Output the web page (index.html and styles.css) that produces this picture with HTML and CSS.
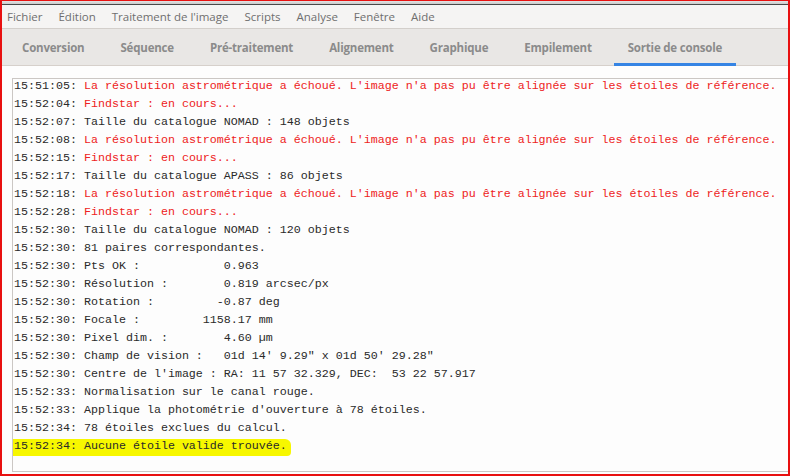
FILE: index.html
```html
<!DOCTYPE html>
<html lang="fr">
<head>
    <meta charset="UTF-8">
    <title>Sortie de console</title>
    <link rel="stylesheet" href="styles.css">
</head>
<body>
    <div class="window">
        <div class="top-edge"></div>

        <div class="menubar">
            <span class="menu-item">Fichier</span>
            <span class="menu-item">Édition</span>
            <span class="menu-item">Traitement de l'image</span>
            <span class="menu-item">Scripts</span>
            <span class="menu-item">Analyse</span>
            <span class="menu-item">Fenêtre</span>
            <span class="menu-item">Aide</span>
        </div>

        <div class="tabbar">
            <div class="tab">Conversion</div>
            <div class="tab">Séquence</div>
            <div class="tab">Pré-traitement</div>
            <div class="tab">Alignement</div>
            <div class="tab">Graphique</div>
            <div class="tab">Empilement</div>
            <div class="tab active">Sortie de console</div>
        </div>

        <div class="content">
            <div class="console">
                <div class="line">15:51:05: <span class="err">La résolution astrométrique a échoué. L'image n'a pas pu être alignée sur les étoiles de référence.</span></div>
                <div class="line">15:52:04: <span class="err">Findstar : en cours...</span></div>
                <div class="line">15:52:07: Taille du catalogue NOMAD : 148 objets</div>
                <div class="line">15:52:08: <span class="err">La résolution astrométrique a échoué. L'image n'a pas pu être alignée sur les étoiles de référence.</span></div>
                <div class="line">15:52:15: <span class="err">Findstar : en cours...</span></div>
                <div class="line">15:52:17: Taille du catalogue APASS : 86 objets</div>
                <div class="line">15:52:18: <span class="err">La résolution astrométrique a échoué. L'image n'a pas pu être alignée sur les étoiles de référence.</span></div>
                <div class="line">15:52:28: <span class="err">Findstar : en cours...</span></div>
                <div class="line">15:52:30: Taille du catalogue NOMAD : 120 objets</div>
                <div class="line">15:52:30: 81 paires correspondantes.</div>
                <div class="line">15:52:30: Pts OK :            0.963</div>
                <div class="line">15:52:30: Résolution :        0.819 arcsec/px</div>
                <div class="line">15:52:30: Rotation :         -0.87 deg</div>
                <div class="line">15:52:30: Focale :         1158.17 mm</div>
                <div class="line">15:52:30: Pixel dim. :        4.60 µm</div>
                <div class="line">15:52:30: Champ de vision :   01d 14' 9.29" x 01d 50' 29.28"</div>
                <div class="line">15:52:30: Centre de l'image : RA: 11 57 32.329, DEC:  53 22 57.917</div>
                <div class="line">15:52:33: Normalisation sur le canal rouge.</div>
                <div class="line">15:52:33: Applique la photométrie d'ouverture à 78 étoiles.</div>
                <div class="line">15:52:34: 78 étoiles exclues du calcul.</div>
                <div class="line marked">15:52:34: Aucune étoile valide trouvée.</div>
            </div>
        </div>
    </div>
</body>
</html>
```

FILE: styles.css
```css
* {
    margin: 0;
    padding: 0;
    box-sizing: border-box;
}

html, body {
    width: 790px;
    height: 476px;
    overflow: hidden;
}

body {
    font-family: 'Open Sans', 'Noto Sans', sans-serif;
    background: #fdfdfd;
}

.window {
    height: 476px;
    display: flex;
    flex-direction: column;
    border: 2px solid #e81010;
    border-top-width: 1px;
    background: #fdfdfd;
}

.top-edge {
    flex-shrink: 0;
    height: 4px;
    background: linear-gradient(#e4e4e4, #c9c9c9);
    border-bottom: 1px solid #4a4a4a;
}

.menubar {
    flex-shrink: 0;
    height: 24px;
    display: flex;
    align-items: center;
    gap: 16px;
    padding-left: 5px;
    background: #f5f4f3;
    border-bottom: 1px solid #d3cfcb;
    font-size: 11.5px;
    color: #6f6f6f;
}

.tabbar {
    flex-shrink: 0;
    height: 37px;
    display: flex;
    gap: 8px;
    padding-left: 6px;
    background: #e9e7e5;
    border-bottom: 1px solid #d6d0cb;
}

.tab {
    padding: 3px 14px 0;
    display: flex;
    align-items: center;
    font-size: 11.5px;
    font-weight: 700;
    letter-spacing: -0.2px;
    color: #8b8b8b;
    border-bottom: 3px solid transparent;
    margin-bottom: -1px;
}

.tab.active {
    border-bottom-color: #3584e4;
}

.content {
    flex: 1;
    min-height: 0;
    padding: 12px 0 2px 10px;
    display: flex;
}

.console {
    flex: 1;
    border: 1px solid #cbc7c4;
    border-right: none;
    padding-left: 1px;
    font-family: 'Liberation Mono', 'Courier New', monospace;
    font-size: 11.67px;
    line-height: 18px;
    color: #2a2a2a;
    overflow: hidden;
}

.line {
    white-space: pre;
}

.line:first-child {
    margin-top: -2px;
}

.err {
    color: #ee2222;
}

.marked {
    position: relative;
    z-index: 0;
}

.marked::before {
    content: '';
    position: absolute;
    z-index: -1;
    left: -9px;
    top: 2px;
    width: 286px;
    height: 17px;
    background: #f7f700;
    border-radius: 3px 6px 4px 2px;
}
```
